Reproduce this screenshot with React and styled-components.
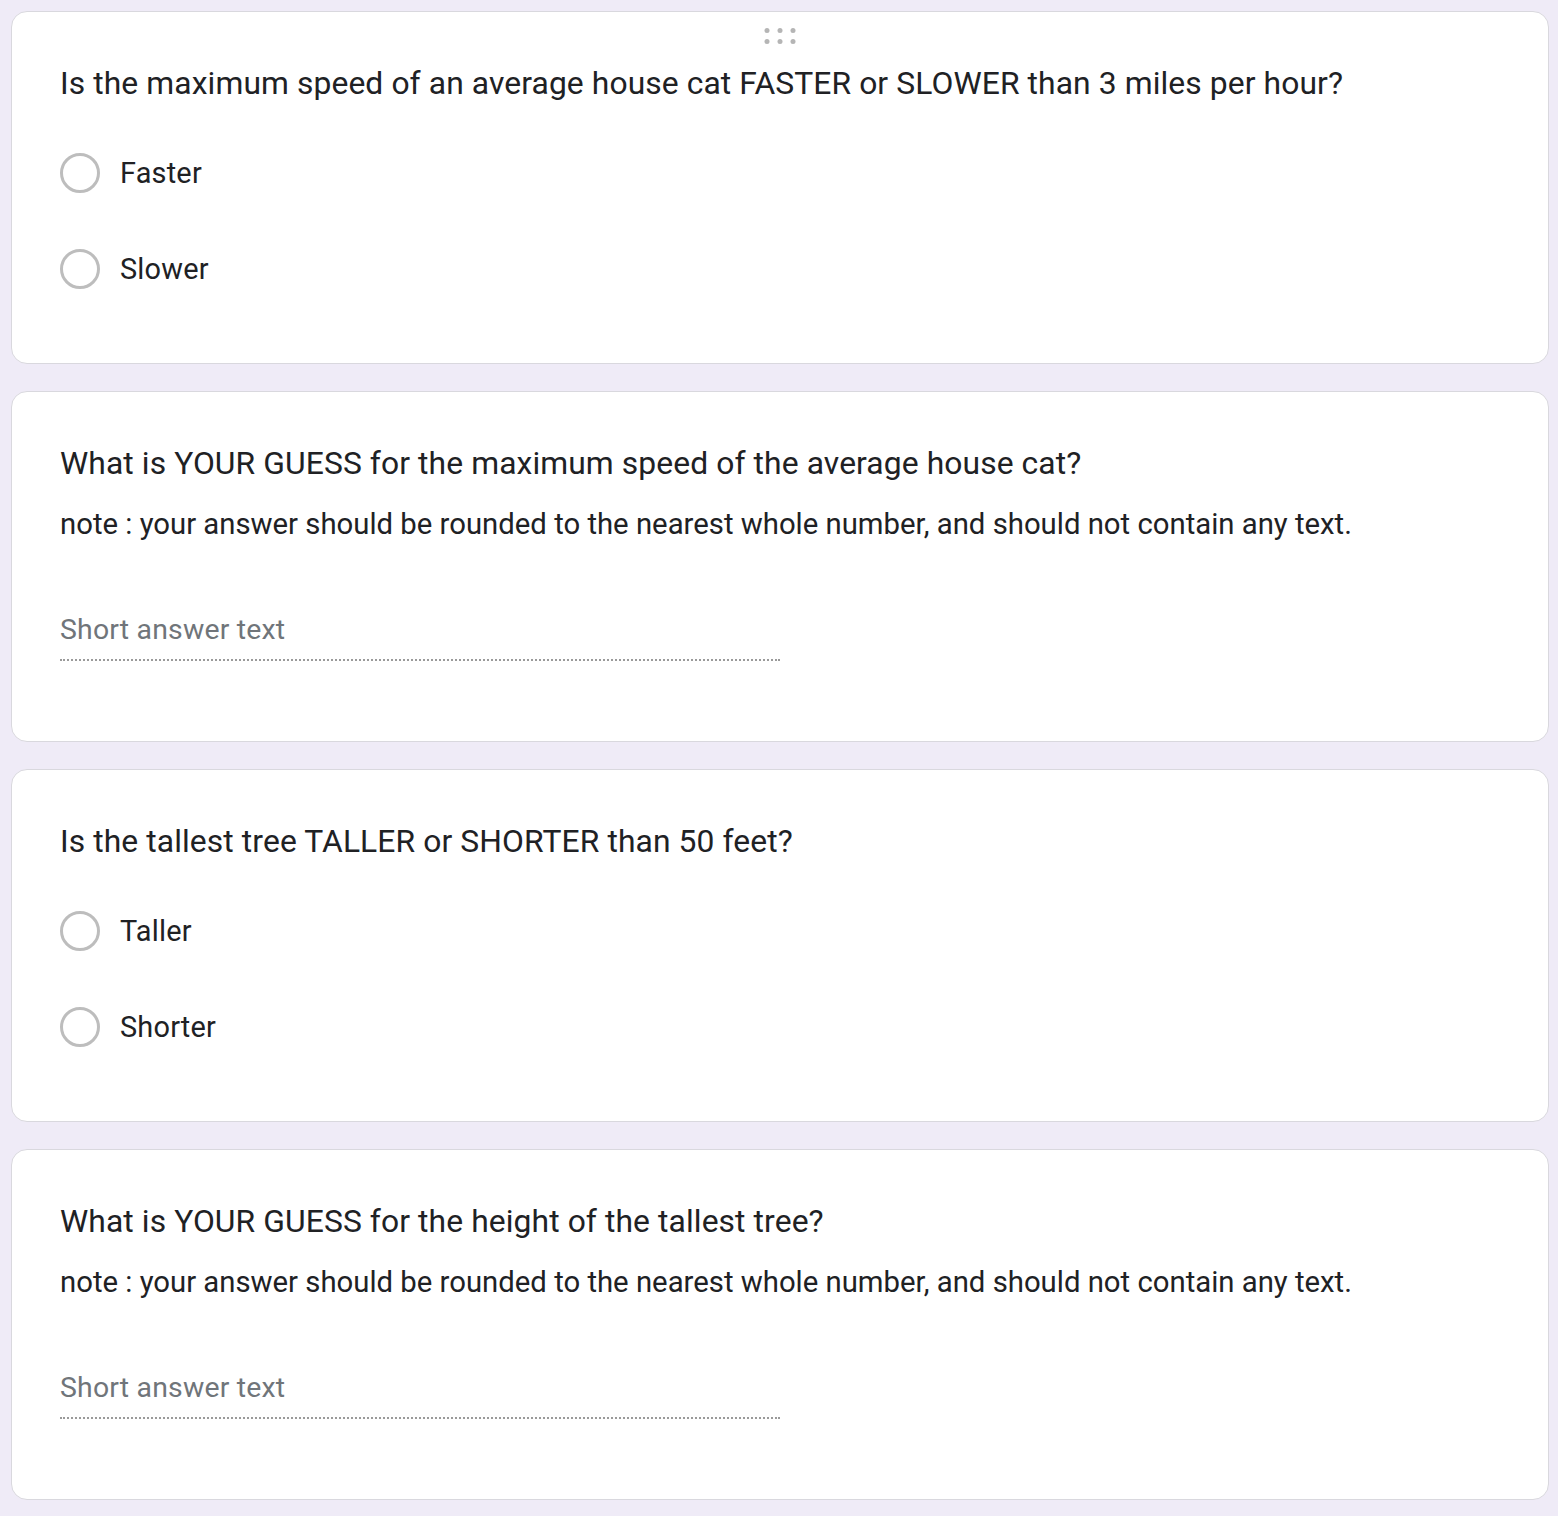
import React from 'react';
import styled, { createGlobalStyle } from 'styled-components';

const GlobalStyle = createGlobalStyle`
  html, body {
    margin: 0;
    padding: 0;
    background: #efebf7;
  }
  body {
    font-family: Roboto, "Liberation Sans", Arial, sans-serif;
    color: #202124;
  }
`;

const questions = [
  {
    id: 1,
    type: 'choice',
    handle: true,
    title: 'Is the maximum speed of an average house cat FASTER or SLOWER than 3 miles per hour?',
    options: ['Faster', 'Slower'],
  },
  {
    id: 2,
    type: 'text',
    title: 'What is YOUR GUESS for the maximum speed of the average house cat?',
    note: 'note : your answer should be rounded to the nearest whole number, and should not contain any text.',
  },
  {
    id: 3,
    type: 'choice',
    title: 'Is the tallest tree TALLER or SHORTER than 50 feet?',
    options: ['Taller', 'Shorter'],
  },
  {
    id: 4,
    type: 'text',
    title: 'What is YOUR GUESS for the height of the tallest tree?',
    note: 'note : your answer should be rounded to the nearest whole number, and should not contain any text.',
  },
];

const App = () => {
  return (
    <>
      <GlobalStyle />
      <Page>
        {questions.map((q) => (
          <Card key={q.id} $text={q.type === 'text'}>
            {q.handle && (
              <Handle>
                {[0, 1, 2, 3, 4, 5].map((i) => <Dot key={i} />)}
              </Handle>
            )}
            <Title>{q.title}</Title>
            {q.note && <Note>{q.note}</Note>}
            {q.type === 'choice' ? (
              <Options>
                {q.options.map((o) => (
                  <Option key={o}>
                    <Radio />
                    <Label>{o}</Label>
                  </Option>
                ))}
              </Options>
            ) : (
              <ShortAnswer>Short answer text</ShortAnswer>
            )}
          </Card>
        ))}
      </Page>
    </>
  );
};

const Page = styled.div`
  display: flex;
  flex-direction: column;
  gap: 27px;
  padding: 11px 9px 16px 11px;
`;

const Card = styled.div`
  position: relative;
  box-sizing: border-box;
  background: #fff;
  border: 1px solid #d9d8de;
  border-radius: 16px;
  padding: 47px 48px ${({ $text }) => ($text ? '80px' : '70px')};
`;

const Handle = styled.div`
  position: absolute;
  top: 16px;
  left: 50%;
  transform: translateX(-50%);
  display: grid;
  grid-template-columns: repeat(3, 5px);
  gap: 6px 8px;
`;

const Dot = styled.span`
  width: 5px;
  height: 5px;
  border-radius: 50%;
  background: #b5b5b5;
`;

const Title = styled.div`
  font-size: 31.8px;
  line-height: 48px;
  letter-spacing: 0.1px;
`;

const Note = styled.div`
  margin-top: 17px;
  font-size: 29.3px;
  line-height: 40px;
`;

const Options = styled.div`
  display: flex;
  flex-direction: column;
  gap: 48px;
  margin-top: 42px;
`;

const Option = styled.div`
  display: flex;
  align-items: center;
  height: 48px;
`;

const Radio = styled.span`
  box-sizing: border-box;
  width: 40px;
  height: 40px;
  border-radius: 50%;
  border: 3px solid #bdbdbd;
  margin-right: 20px;
`;

const Label = styled.span`
  font-size: 28.9px;
  letter-spacing: 0.2px;
`;

const ShortAnswer = styled.div`
  width: 720px;
  margin-top: 66px;
  padding-bottom: 9px;
  font-size: 28.4px;
  line-height: 40px;
  color: #70757a;
  letter-spacing: 0.2px;
  border-bottom: 2px dotted #9a9a9a;
`;

export default App;
